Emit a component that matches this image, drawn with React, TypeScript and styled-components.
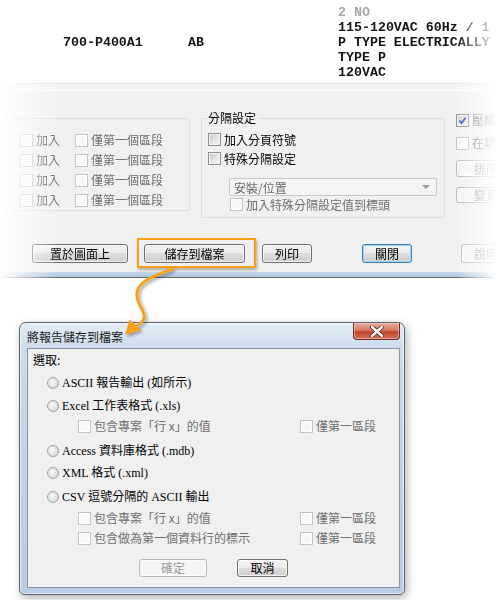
import React from 'react'
import styled, { createGlobalStyle } from 'styled-components'

const GlobalStyle = createGlobalStyle`
  html, body {
    margin: 0;
    padding: 0;
    background: #fff;
  }
  body {
    font-family: "Noto Sans CJK TC", "Liberation Sans", sans-serif;
  }
`

const CJK = `"Noto Sans CJK TC", "Liberation Sans", sans-serif`
const MING = `"Liberation Serif", "Noto Sans CJK TC", serif`

const Page = styled.div`
  position: relative;
  width: 501px;
  height: 600px;
  overflow: hidden;
  background: #fff;
`

// the cropped report window, fading out to the left and right
const Capture = styled.div`
  width: 501px;
  overflow: hidden;
  -webkit-mask-image: linear-gradient(to right, transparent 0, #000 58px, #000 455px, transparent 497px);
  mask-image: linear-gradient(to right, transparent 0, #000 58px, #000 455px, transparent 497px);
`

const DataBlock = styled.div`
  height: 83px;
  box-sizing: border-box;
  padding-top: 5px;
  font-family: "Liberation Mono", "DejaVu Sans Mono", monospace;
  font-weight: bold;
  font-size: 13.3px;
  line-height: 15px;
`

const DataRow = styled.div<{ $faint?: boolean }>`
  display: grid;
  grid-template-columns: 63px 125px 150px auto;
  height: 15px;
  white-space: nowrap;
  color: ${p => (p.$faint ? '#a5a5a5' : '#141414')};
`

const Panel = styled.div`
  height: 195px;
  box-sizing: border-box;
  background: #f0f0f0;
  border-top: 1px solid #e2e2e2;
  display: flex;
  flex-direction: column;
  font-family: ${CJK};
  font-size: 12px;
`

const PanelStrip = styled.div`
  height: 6px;
  background: #f4f4f4;
  border-bottom: 1px solid #fcfcfc;
`

const GroupsRow = styled.div`
  display: flex;
  align-items: flex-start;
  margin-top: 20px;
  & > * {
    flex: none;
  }
`

const LeftGroup = styled.div`
  margin: 7px 0 0 4px;
  width: 186px;
  height: 93px;
  box-sizing: border-box;
  border: 1px solid #d5dfe5;
  border-radius: 3px;
  padding: 11px 0 0 15px;
`

const PairRow = styled.div`
  display: grid;
  grid-template-columns: 55px auto;
  height: 20px;
  align-items: center;
`

const Fieldset = styled.fieldset`
  margin: 0 0 0 11px;
  padding: 0 0 4px 6px;
  width: 244px;
  box-sizing: border-box;
  border: 1px solid #d5dfe5;
  border-radius: 3px;
  min-width: 0;
`

const Legend = styled.legend`
  padding: 0 2px 0 0;
  margin-left: 0;
  font-size: 12px;
  line-height: 14px;
  color: #000;
`

const Row = styled.div<{ $mt?: number; $h?: number; $ml?: number }>`
  display: flex;
  align-items: center;
  height: ${p => p.$h ?? 20}px;
  margin-top: ${p => p.$mt ?? 0}px;
  margin-left: ${p => p.$ml ?? 0}px;
  white-space: nowrap;
`

const Label = styled.span<{ $dim?: boolean; $serif?: boolean }>`
  margin-left: 3px;
  font-family: ${p => (p.$serif ? MING : CJK)};
  font-size: 12px;
  line-height: 14px;
  color: ${p => (p.$dim ? '#6f6f6f' : '#000')};
`

const Check = styled.span<{ $off?: boolean }>`
  display: inline-flex;
  align-items: center;
  justify-content: center;
  flex: none;
  box-sizing: border-box;
  width: 13px;
  height: 13px;
  border: 1px solid ${p => (p.$off ? '#c4c4c4' : '#8e8f8f')};
  background: ${p => (p.$off ? '#f8f8f8' : 'linear-gradient(135deg, #c9c9c9 0%, #e6e6e6 60%, #f6f6f6 100%)')};
  box-shadow: inset 0 0 0 1px ${p => (p.$off ? '#ffffff' : '#f4f4f4')};
`

const Radio = styled.span`
  flex: none;
  box-sizing: border-box;
  width: 12px;
  height: 12px;
  border-radius: 50%;
  border: 1px solid #a2a2a2;
  background: radial-gradient(circle at 40% 40%, #fafafa 0%, #e2e2e2 55%, #c8c8c8 100%);
`

const Combo = styled.div`
  display: flex;
  align-items: center;
  justify-content: space-between;
  box-sizing: border-box;
  width: 208px;
  height: 18px;
  margin: 10px 0 0 21px;
  padding: 0 6px 0 4px;
  border: 1px solid #c9c9c9;
  border-radius: 2px;
  background: #f4f4f4;
  color: #6d6d6d;
  font-size: 12px;
`

const ComboArrow = styled.span`
  width: 0;
  height: 0;
  border-left: 4px solid transparent;
  border-right: 4px solid transparent;
  border-top: 4px solid #9a9a9a;
`

const SideCol = styled.div`
  margin-left: 11px;
  display: flex;
  flex-direction: column;
`

const WinButton = styled.button<{ $w: number; $ml?: number; $primary?: boolean; $off?: boolean; $h?: number }>`
  flex: none;
  box-sizing: border-box;
  width: ${p => p.$w}px;
  height: ${p => p.$h ?? 19}px;
  margin-left: ${p => p.$ml ?? 0}px;
  padding: 0;
  font-family: ${CJK};
  font-size: 12px;
  line-height: 14px;
  color: ${p => (p.$off ? '#9c9c9c' : '#000')};
  border: 1px solid ${p => (p.$primary ? '#3c7fb1' : p.$off ? '#b5b9bc' : '#707070')};
  border-radius: 3px;
  background: ${p =>
    p.$off
      ? '#f4f4f4'
      : 'linear-gradient(to bottom, #f2f2f2 0%, #ebebeb 49%, #dddddd 50%, #cfcfcf 100%)'};
  box-shadow: inset 0 0 0 1px ${p => (p.$primary ? '#9fd8f5' : 'rgba(255,255,255,0.75)')};
`

const ButtonRow = styled.div`
  display: flex;
  margin: 26px 0 0 32px;
`

const BlueBand = styled.div`
  margin-top: auto;
  height: 5px;
  background: linear-gradient(to bottom, #c9d9ea, #a9c2dc);
  border-bottom: 1px solid #6b6b6b;
`

const Dialog = styled.div`
  margin: 44px 0 0 19px;
  width: 386px;
  height: 273px;
  box-sizing: border-box;
  border: 1px solid #5a6470;
  border-radius: 7px 7px 5px 5px;
  background: linear-gradient(to bottom, #e3edf7 0%, #cddcec 24px, #bed1e6 60%, #b7cce3 100%);
  box-shadow: 2px 3px 8px rgba(0, 0, 0, 0.3), inset 0 0 0 1px rgba(255, 255, 255, 0.6);
  display: flex;
  flex-direction: column;
  padding: 0 4px 6px 7px;
`

const TitleBar = styled.div`
  height: 25px;
  display: flex;
  align-items: flex-start;
  justify-content: space-between;
`

const TitleText = styled.span`
  margin-top: 7px;
  font-family: ${CJK};
  font-size: 12px;
  line-height: 14px;
  color: #1a1a1a;
`

const CloseButton = styled.div`
  width: 47px;
  height: 17px;
  box-sizing: border-box;
  display: flex;
  align-items: center;
  justify-content: center;
  border: 1px solid #6e2c22;
  border-top: none;
  border-radius: 0 0 4px 4px;
  background: linear-gradient(to bottom, #e5aa99 0%, #d67c66 45%, #c2432c 55%, #d0705a 100%);
  box-shadow: inset 0 0 0 1px rgba(255, 220, 210, 0.5);
`

const Client = styled.div`
  flex: 1;
  border: 1px solid #8694a3;
  background: #f0f0f0;
  font-size: 12px;
`

const SubRow = styled.div<{ $mt?: number }>`
  display: grid;
  grid-template-columns: 222px auto;
  height: 20px;
  margin: ${p => p.$mt ?? 0}px 0 0 50px;
`

const Cell = styled.div`
  display: flex;
  align-items: center;
  white-space: nowrap;
`

const DialogButtons = styled.div`
  display: flex;
  margin: 11px 0 0 111px;
`

const Highlight = styled.div`
  position: absolute;
  left: 137px;
  top: 238px;
  width: 119px;
  height: 30px;
  box-sizing: border-box;
  border: 2px solid #f7a11b;
  box-shadow: 1px 2px 3px rgba(0, 0, 0, 0.3);
  pointer-events: none;
`

const ArrowLayer = styled.svg`
  position: absolute;
  left: 0;
  top: 0;
  pointer-events: none;
`

const CheckMark = () => (
  <svg width="9" height="9" viewBox="0 0 9 9">
    <path d="M1.5 4.5 L3.6 7 L7.8 1.5" fill="none" stroke="#2a55a8" strokeWidth="1.8" />
  </svg>
)

const CloseX = () => (
  <svg width="14" height="11" viewBox="0 0 14 11">
    <path d="M2 1 L12 10 M12 1 L2 10" stroke="#5a1d14" strokeWidth="4" strokeLinecap="round" />
    <path d="M2 1 L12 10 M12 1 L2 10" stroke="#ffffff" strokeWidth="2.4" strokeLinecap="round" />
  </svg>
)

const Arrow = () => (
  <ArrowLayer width="501" height="600" viewBox="0 0 501 600">
    <defs>
      <filter id="arrowShadow" x="-20%" y="-20%" width="160%" height="160%">
        <feDropShadow dx="2" dy="2" stdDeviation="1.5" floodColor="#000" floodOpacity="0.35" />
      </filter>
    </defs>
    <g filter="url(#arrowShadow)">
      <path
        d="M172 269 C158 275, 139 280, 137 292 C135 304, 146 310, 144 318 C143 322, 140 324, 136 326"
        fill="none"
        stroke="#f7a11b"
        strokeWidth="3"
        strokeLinecap="round"
      />
      <path d="M125 335 L129.5 319.5 L141 330 Z" fill="#f7a11b" />
    </g>
  </ArrowLayer>
)

const pairRows = [0, 1, 2, 3]

export default function App() {
  return (
    <Page>
      <GlobalStyle />
      <Capture>
        <DataBlock>
          <DataRow $faint>
            <span />
            <span />
            <span />
            <span>2 NO</span>
          </DataRow>
          <DataRow>
            <span />
            <span />
            <span />
            <span>115-120VAC 60Hz / 1</span>
          </DataRow>
          <DataRow>
            <span />
            <span>700-P400A1</span>
            <span>AB</span>
            <span>P TYPE ELECTRICALLY</span>
          </DataRow>
          <DataRow>
            <span />
            <span />
            <span />
            <span>TYPE P</span>
          </DataRow>
          <DataRow>
            <span />
            <span />
            <span />
            <span>120VAC</span>
          </DataRow>
        </DataBlock>

        <Panel>
          <PanelStrip />
          <GroupsRow>
            <LeftGroup>
              {pairRows.map(i => (
                <PairRow key={i}>
                  <Cell>
                    <Check $off />
                    <Label $dim>加入</Label>
                  </Cell>
                  <Cell>
                    <Check $off />
                    <Label $dim>僅第一個區段</Label>
                  </Cell>
                </PairRow>
              ))}
            </LeftGroup>

            <Fieldset>
              <Legend>分隔設定</Legend>
              <Row $mt={5} $h={19}>
                <Check />
                <Label>加入分頁符號</Label>
              </Row>
              <Row $h={19}>
                <Check />
                <Label>特殊分隔設定</Label>
              </Row>
              <Combo>
                <span>安裝/位置</span>
                <ComboArrow />
              </Combo>
              <Row $h={17} $ml={22}>
                <Check $off />
                <Label $dim>加入特殊分隔設定值到標頭</Label>
              </Row>
            </Fieldset>

            <SideCol>
              <Row $h={18}>
                <Check>
                  <CheckMark />
                </Check>
                <Label $dim>壓縮</Label>
              </Row>
              <Row $h={18} $mt={5}>
                <Check $off />
                <Label $dim>在功</Label>
              </Row>
              <WinButton $w={60} $h={17} $off style={{ marginTop: 8 }}>
                排序
              </WinButton>
              <WinButton $w={60} $h={16} $off style={{ marginTop: 10 }}>
                變更
              </WinButton>
            </SideCol>
          </GroupsRow>

          <ButtonRow>
            <WinButton $w={96}>置於圖面上</WinButton>
            <WinButton $w={101} $ml={16}>
              儲存到檔案
            </WinButton>
            <WinButton $w={50} $ml={17}>
              列印
            </WinButton>
            <WinButton $w={50} $ml={50} $primary>
              關閉
            </WinButton>
            <WinButton $w={50} $ml={49} $off>
              說明
            </WinButton>
          </ButtonRow>
          <BlueBand />
        </Panel>
      </Capture>

      <Dialog>
        <TitleBar>
          <TitleText>將報告儲存到檔案</TitleText>
          <CloseButton>
            <CloseX />
          </CloseButton>
        </TitleBar>
        <Client>
          <Row $mt={1} $ml={5}>
            <Label style={{ marginLeft: 0 }}>選取:</Label>
          </Row>
          <Row $mt={3} $ml={19}>
            <Radio />
            <Label $serif>ASCII 報告輸出 (如所示)</Label>
          </Row>
          <Row $mt={3} $ml={19}>
            <Radio />
            <Label $serif>Excel 工作表格式 (.xls)</Label>
          </Row>
          <SubRow>
            <Cell>
              <Check $off />
              <Label $dim>包含專案「行 x」的值</Label>
            </Cell>
            <Cell>
              <Check $off />
              <Label $dim>僅第一區段</Label>
            </Cell>
          </SubRow>
          <Row $mt={5} $ml={19}>
            <Radio />
            <Label $serif>Access 資料庫格式 (.mdb)</Label>
          </Row>
          <Row $mt={2} $ml={19}>
            <Radio />
            <Label $serif>XML 格式 (.xml)</Label>
          </Row>
          <Row $mt={4} $ml={19}>
            <Radio />
            <Label $serif>CSV 逗號分隔的 ASCII 輸出</Label>
          </Row>
          <SubRow $mt={1}>
            <Cell>
              <Check $off />
              <Label $dim>包含專案「行 x」的值</Label>
            </Cell>
            <Cell>
              <Check $off />
              <Label $dim>僅第一區段</Label>
            </Cell>
          </SubRow>
          <SubRow>
            <Cell>
              <Check $off />
              <Label $dim>包含做為第一個資料行的標示</Label>
            </Cell>
            <Cell>
              <Check $off />
              <Label $dim>僅第一區段</Label>
            </Cell>
          </SubRow>
          <DialogButtons>
            <WinButton $w={68} $h={18} $off>
              確定
            </WinButton>
            <WinButton $w={51} $h={18} $ml={30}>
              取消
            </WinButton>
          </DialogButtons>
        </Client>
      </Dialog>

      <Highlight />
      <Arrow />
    </Page>
  )
}
